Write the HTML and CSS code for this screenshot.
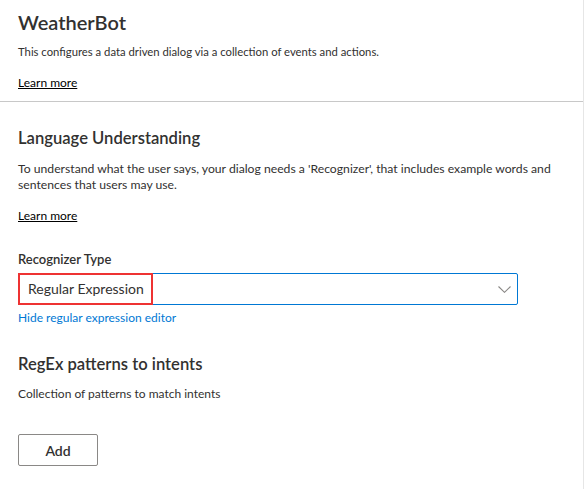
FILE: index.html
```html
<!DOCTYPE html>
<html>
<head>
<meta charset="utf-8">
<link rel="stylesheet" href="styles.css">
</head>
<body>
<div class="page">
  <header class="intro">
    <h1 class="title">WeatherBot</h1>
    <p class="desc small">This configures a data driven dialog via a collection of events and actions.</p>
    <a class="learn" href="#">Learn more</a>
  </header>
  <section class="section lu">
    <h2 class="heading">Language Understanding</h2>
    <p class="desc para">To understand what the user says, your dialog needs a 'Recognizer', that includes example words and sentences that users may use.</p>
    <a class="learn" href="#">Learn more</a>
    <div class="field">
      <div class="label">Recognizer Type</div>
      <div class="dropdown">
        <span class="value">Regular Expression</span>
        <svg class="chev" width="13" height="7" viewBox="0 0 13 7"><path d="M0.5 0.5 L6.5 6.3 L12.5 0.5" fill="none" stroke="#8a8886" stroke-width="1.1"/></svg>
        <span class="highlight"></span>
      </div>
      <a class="hide" href="#">Hide regular expression editor</a>
    </div>
  </section>
  <section class="section regex">
    <h2 class="heading">RegEx patterns to intents</h2>
    <p class="desc">Collection of patterns to match intents</p>
    <button class="add">Add</button>
  </section>
</div>
</body>
</html>
```
FILE: styles.css
```css
html, body {
  margin: 0;
  padding: 0;
  background: #fff;
}
body {
  font-family: "Segoe UI", "Lato", "Open Sans", sans-serif;
  color: #323130;
  width: 584px;
  height: 489px;
  overflow: hidden;
}
.page {
  width: 583px;
  height: 489px;
  border-right: 1px solid #e6e6e6;
}
.intro {
  padding: 8px 18px 0;
  border-bottom: 1px solid #c8c8c8;
  box-sizing: border-box;
  height: 102px;
}
.title {
  margin: 0;
  font-size: 20px;
  font-weight: 600;
  line-height: 28px;
}
.desc {
  margin: 0;
  font-size: 12px;
  line-height: 16px;
}
.intro .desc {
  margin-top: 8px;
  font-size: 11.3px;
}
.learn {
  display: inline-block;
  font-size: 12px;
  line-height: 16px;
  color: #000;
  text-decoration: underline;
  margin-top: 15px;
}
.section {
  padding: 0 18px;
}
.heading {
  margin: 0;
  font-size: 16.6px;
  font-weight: 600;
  line-height: 22px;
}
.lu {
  padding-top: 25px;
}
.lu .para {
  margin-top: 12px;
  font-size: 12.2px;
  line-height: 16px;
}
.lu .learn {
  margin-top: 15px;
}
.field {
  margin-top: 25px;
}
.label {
  font-size: 13px;
  font-weight: 600;
  line-height: 20px;
}
.dropdown {
  position: relative;
  margin-top: 4px;
  width: 500px;
  height: 32px;
  box-sizing: border-box;
  border: 1px solid #0078d4;
  border-radius: 2px;
  display: flex;
  align-items: center;
  padding: 0 0 0 9px;
}
.value {
  flex: 1;
  font-size: 14px;
  line-height: 20px;
}
.chev {
  margin-right: 6px;
}
.highlight {
  position: absolute;
  left: -1px;
  top: -1px;
  width: 135px;
  height: 32px;
  border: 2px solid #ee3333;
  box-sizing: border-box;
}
.hide {
  display: block;
  margin-top: 5px;
  font-size: 12px;
  line-height: 16px;
  color: #0078d4;
  text-decoration: none;
}
.regex {
  padding-top: 27px;
}
.regex .desc {
  margin-top: 11px;
}
.add {
  margin-top: 32px;
  width: 80px;
  height: 32px;
  font-family: inherit;
  font-size: 14px;
  font-weight: 600;
  color: #323130;
  background: #fff;
  border: 1px solid #8a8886;
  border-radius: 2px;
  padding: 0;
}
```
